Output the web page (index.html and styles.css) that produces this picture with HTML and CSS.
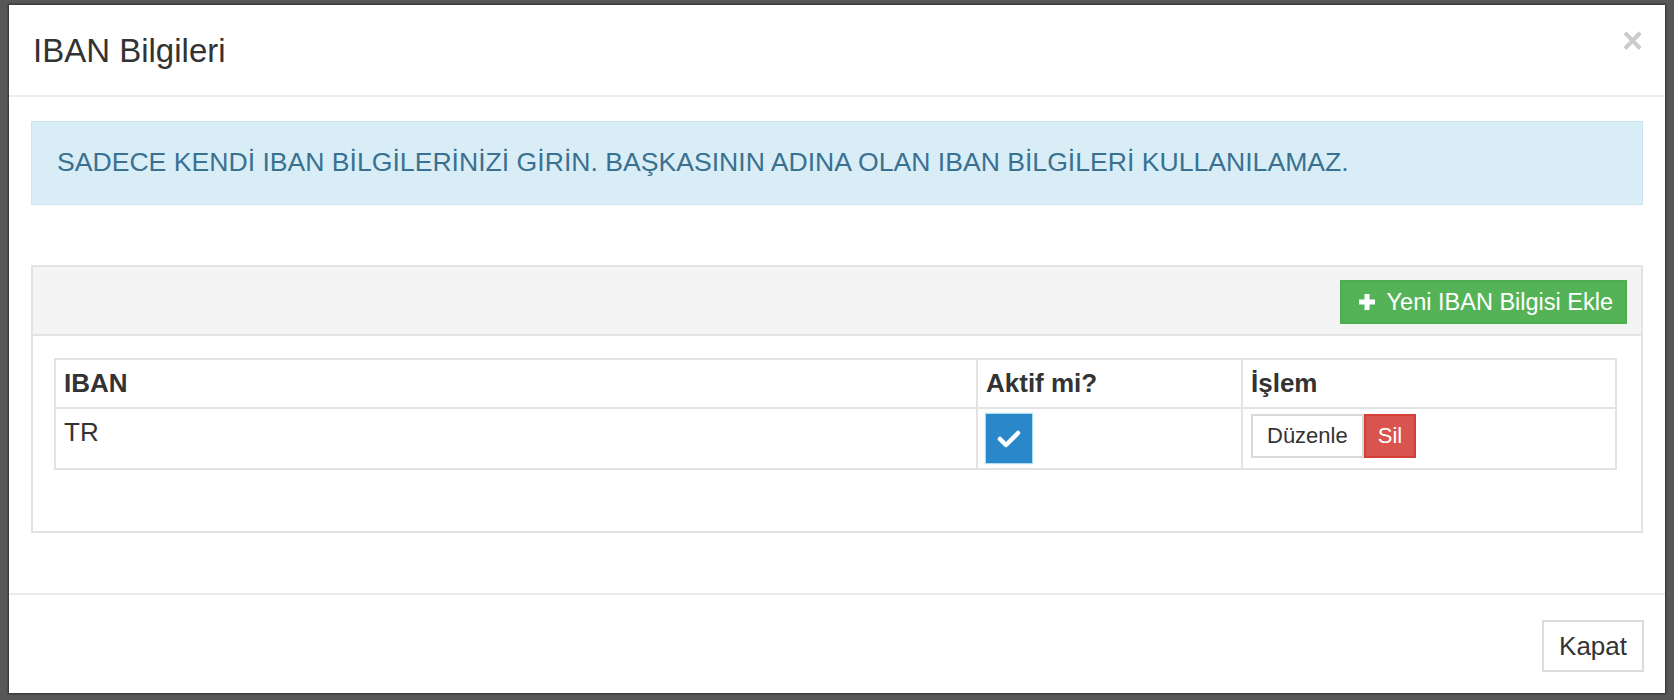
FILE: index.html
```html
<!DOCTYPE html>
<html lang="tr">
<head>
<meta charset="utf-8">
<title>IBAN Bilgileri</title>
<link rel="stylesheet" href="styles.css">
</head>
<body>
<div class="backdrop">
  <div class="modal">
    <div class="modal-header">
      <h4 class="modal-title">IBAN Bilgileri</h4>
      <button class="close" type="button">&times;</button>
    </div>
    <div class="modal-body">
      <div class="alert">SADECE KENDİ IBAN BİLGİLERİNİZİ GİRİN. BAŞKASININ ADINA OLAN IBAN BİLGİLERİ KULLANILAMAZ.</div>
      <div class="panel">
        <div class="panel-heading">
          <button class="btn btn-success" type="button">
            <svg class="plus" width="18" height="18" viewBox="0 0 18 18"><path d="M9 1v16M1 9h16" stroke="#fff" stroke-width="5"/></svg>
            <span>Yeni IBAN Bilgisi Ekle</span>
          </button>
        </div>
        <div class="panel-body">
          <table class="iban-table">
            <thead>
              <tr>
                <th class="col-iban">IBAN</th>
                <th class="col-aktif">Aktif mi?</th>
                <th>İşlem</th>
              </tr>
            </thead>
            <tbody>
              <tr>
                <td>TR</td>
                <td>
                  <span class="check">
                    <svg width="24" height="18" viewBox="0 0 24 18"><path d="M3 9l6 6L21 3" fill="none" stroke="#fff" stroke-width="4.5" stroke-linecap="round" stroke-linejoin="round"/></svg>
                  </span>
                </td>
                <td>
                  <div class="btn-group">
                    <button class="btn btn-sm btn-default" type="button">Düzenle</button><button class="btn btn-sm btn-danger" type="button">Sil</button>
                  </div>
                </td>
              </tr>
            </tbody>
          </table>
        </div>
      </div>
    </div>
    <div class="modal-footer">
      <button class="btn btn-default btn-close" type="button">Kapat</button>
    </div>
  </div>
</div>
</body>
</html>
```

FILE: styles.css
```css
* { box-sizing: border-box; }

html, body {
  margin: 0;
  padding: 0;
  height: 700px;
  overflow: hidden;
}

body {
  background: #575757;
  font-family: "Liberation Sans", Arial, sans-serif;
  color: #333;
}

.backdrop {
  padding: 5px 0 0 9px;
}

.modal {
  width: 1656px;
  background: #fff;
  box-shadow: 0 0 2px 1px rgba(0, 0, 0, 0.45);
  display: flex;
  flex-direction: column;
}

.modal-header {
  display: flex;
  justify-content: space-between;
  align-items: flex-start;
  padding: 22px 22px 21px 24px;
  border-bottom: 2px solid #ebebeb;
}

.modal-title {
  margin: 0;
  font-size: 33px;
  line-height: 47px;
  font-weight: normal;
  color: #333;
}

.close {
  margin-top: -4px;
  padding: 0;
  border: 0;
  background: none;
  font-family: "Liberation Sans", Arial, sans-serif;
  font-size: 36px;
  font-weight: bold;
  line-height: 1;
  color: #000;
  opacity: 0.2;
}

.modal-body {
  padding: 24px 22px 22px 22px;
}

.alert {
  background: #d9edf7;
  border: 1px solid #c6e6f0;
  color: #3a7191;
  font-size: 26.6px;
  line-height: 37px;
  padding: 22px 25px 23px;
  margin-bottom: 60px;
}

.panel {
  border: 2px solid #e3e3e3;
  margin-bottom: 38px;
}

.panel-heading {
  background: #f4f4f4;
  border-bottom: 2px solid #e3e3e3;
  padding: 13px 14px 10px 14px;
  display: flex;
  justify-content: flex-end;
}

.panel-body {
  padding: 22px 23px 61px 21px;
}

.btn {
  font-family: "Liberation Sans", Arial, sans-serif;
  border: 2px solid transparent;
  margin: 0;
  cursor: pointer;
}

.btn-success {
  display: flex;
  align-items: center;
  gap: 11px;
  height: 44px;
  padding: 0 12px 0 16px;
  background: #55b357;
  border-color: #4cae4c;
  color: #fff;
  font-size: 23.5px;
  line-height: 30px;
}

.plus {
  display: block;
  flex: none;
}

.iban-table {
  width: 1563px;
  border-collapse: separate;
  border-spacing: 0;
  border: 2px solid #e3e3e3;
  font-size: 26px;
  line-height: 37px;
}

.iban-table th,
.iban-table td {
  text-align: left;
  vertical-align: top;
  padding: 5px 8px;
  border-left: 2px solid #e3e3e3;
  border-top: 2px solid #e3e3e3;
}

.iban-table th:first-child,
.iban-table td:first-child {
  border-left: 0;
}

.iban-table thead th {
  border-top: 0;
  font-weight: bold;
  color: #333;
}

.iban-table td {
  color: #333;
}

.col-iban { width: 920px; }
.col-aktif { width: 265px; }

.check {
  display: flex;
  align-items: center;
  justify-content: center;
  width: 46px;
  height: 49px;
  background: #2a87c9;
  box-shadow: 0 0 1px 1px rgba(120, 200, 230, 0.6);
}

.btn-group {
  display: flex;
}

.btn-sm {
  height: 44px;
  font-size: 22px;
  line-height: 30px;
}

.btn-default {
  background: #fff;
  border-color: #dadada;
  color: #333;
  padding: 0 14px;
}

.btn-danger {
  background: #d9534f;
  border-color: #d43f3a;
  color: #fff;
  padding: 0 12px;
}

.modal-footer {
  border-top: 2px solid #ebebeb;
  padding: 25px 21px 21px 22px;
  display: flex;
  justify-content: flex-end;
}

.btn-close {
  height: 52px;
  padding: 0 15px;
  font-size: 26px;
  line-height: 36px;
  border-color: #dcdcdc;
}
```
